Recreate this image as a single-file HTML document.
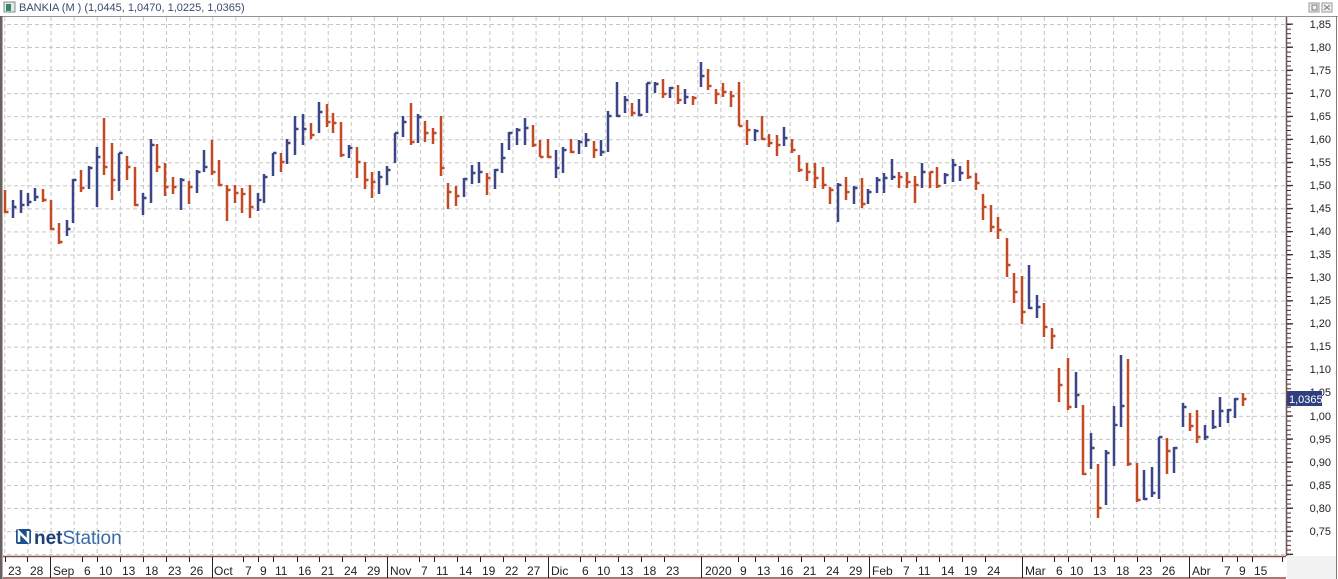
<!DOCTYPE html>
<html><head><meta charset="utf-8"><style>
html,body{margin:0;padding:0;background:#fff;}
body{width:1338px;height:579px;overflow:hidden;position:relative;font-family:"Liberation Sans",sans-serif;}
</style></head><body>
<svg width="1338" height="579" viewBox="0 0 1338 579" xmlns="http://www.w3.org/2000/svg" style="position:absolute;left:0;top:0">
<defs>
<pattern id="hg" patternUnits="userSpaceOnUse" x="0" y="24" width="1338" height="23.05">
<line x1="0" y1="0.5" x2="1338" y2="0.5" stroke="#c4c4c4" stroke-width="1" stroke-dasharray="4,3"/>
</pattern>
<pattern id="vg" patternUnits="userSpaceOnUse" x="4.3" y="17" width="23.1" height="600">
<line x1="0.5" y1="0" x2="0.5" y2="600" stroke="#c4c4c4" stroke-width="1" stroke-dasharray="4,3"/>
</pattern>
</defs>
<rect width="1338" height="579" fill="#fff"/>
<rect x="0" y="0" width="1338" height="15" fill="#fff"/>
<rect x="4" y="2" width="11" height="10" fill="#e8e8e8" stroke="#888" stroke-width="1"/>
<rect x="6" y="4" width="5" height="7" fill="#2e8a6e"/>
<text x="19" y="11" font-size="11" fill="#3a4a6a">BANKIA (M ) (1,0445, 1,0470, 1,0225, 1,0365)</text>
<rect x="1309" y="3" width="10" height="9" fill="#f0f0f0" stroke="#999"/>
<rect x="1312" y="5" width="5" height="5" fill="none" stroke="#777"/>
<rect x="1322" y="3" width="10" height="9" fill="#f0f0f0" stroke="#999"/>
<path d="M1324 5l6 5M1330 5l-6 5" stroke="#777" stroke-width="1"/>
<line x1="0" y1="16.5" x2="1338" y2="16.5" stroke="#9a9090" stroke-width="1"/>
<rect x="0" y="16" width="2.5" height="563" fill="#6a6060"/>
<rect x="4" y="17" width="1282" height="539" fill="url(#hg)"/>
<rect x="4" y="17" width="1282" height="539" fill="url(#vg)"/>
<line x1="1286.5" y1="17" x2="1286.5" y2="556" stroke="#7a5050" stroke-width="1.5"/>
<line x1="1289" y1="24" x2="1289" y2="556" stroke="#333" stroke-width="4" stroke-dasharray="1 3.61"/>
<line x1="1290" y1="23.5" x2="1290" y2="556" stroke="#333" stroke-width="6" stroke-dasharray="1.3 21.75"/>
<line x1="1336.5" y1="16" x2="1336.5" y2="579" stroke="#8a7a7a" stroke-width="1"/>
<g font-size="11" fill="#222" text-anchor="end">
<text x="1331" y="28">1,85</text><text x="1331" y="51">1,80</text><text x="1331" y="74">1,75</text><text x="1331" y="97">1,70</text><text x="1331" y="120">1,65</text><text x="1331" y="143">1,60</text><text x="1331" y="166">1,55</text><text x="1331" y="189">1,50</text><text x="1331" y="212">1,45</text><text x="1331" y="235">1,40</text><text x="1331" y="258">1,35</text><text x="1331" y="281">1,30</text><text x="1331" y="304">1,25</text><text x="1331" y="327">1,20</text><text x="1331" y="350">1,15</text><text x="1331" y="373">1,10</text><text x="1331" y="396">1,05</text><text x="1331" y="420">1,00</text><text x="1331" y="443">0,95</text><text x="1331" y="466">0,90</text><text x="1331" y="489">0,85</text><text x="1331" y="512">0,80</text><text x="1331" y="535">0,75</text>
</g>
<rect x="1287" y="391" width="35" height="15" fill="#2f3f80"/>
<text x="1289" y="403" font-size="11" fill="#fff">1,0365</text>
<path fill="none" stroke="#c24b25" stroke-width="2.5" d="M5 190V213M5 212h3.5M43 189V202M43 200h3.5M51 200V230M51 229h3.5M59 223V244M59 242h3.5M81 170V192M81 188h3.5M104 118V175M104 167h3.5M112 143V200M112 180h3.5M127 156V180M127 167h3.5M135 167V206M135 205h3.5M157 144V172M157 167h3.5M165 163V196M165 187h3.5M173 177V194M173 187h3.5M189 181V204M189 187h3.5M212 140V175M212 172h3.5M219 160V186M219 185h3.5M227 185V221M227 190h3.5M235 185V203M235 193h3.5M242 188V213M242 194h3.5M250 185V218M250 207h3.5M281 153V172M281 162h3.5M311 123V139M311 135h3.5M327 104V127M327 122h3.5M333 113V133M333 123h3.5M341 122V157M341 155h3.5M357 147V178M357 162h3.5M365 162V189M365 180h3.5M372 172V198M372 182h3.5M411 103V145M411 142h3.5M425 121V142M425 133h3.5M433 128V144M433 133h3.5M441 116V176M441 168h3.5M448 183V209M448 192h3.5M456 186V206M456 196h3.5M487 173V195M487 178h3.5M533 125V147M533 145h3.5M540 140V157M540 157h3.5M548 139V158M548 157h3.5M571 139V153M571 152h3.5M594 141V158M594 150h3.5M632 103V116M632 113h3.5M663 79V98M663 94h3.5M678 85V104M678 100h3.5M693 96V105M693 98h3.5M708 69V90M708 86h3.5M716 89V104M716 94h3.5M723 83V97M723 92h3.5M731 91V107M731 96h3.5M739 82V126M739 126h3.5M747 120V145M747 130h3.5M762 116V140M762 139h3.5M769 134V147M769 143h3.5M777 135V156M777 145h3.5M792 139V153M792 150h3.5M799 155V172M799 170h3.5M807 163V181M807 172h3.5M815 163V188M815 178h3.5M823 167V189M823 185h3.5M830 187V204M830 190h3.5M846 177V200M846 192h3.5M862 178V208M862 204h3.5M899 172V188M899 177h3.5M907 172V188M907 182h3.5M915 176V203M915 185h3.5M930 172V188M930 172h3.5M937 167V188M937 186h3.5M968 160V179M968 177h3.5M976 173V190M976 183h3.5M983 194V220M983 207h3.5M991 205V232M991 227h3.5M998 217V239M998 230h3.5M1007 238V277M1007 265h3.5M1014 273V303M1014 292h3.5M1022 276V324M1022 312h3.5M1044 303V337M1044 327h3.5M1052 328V349M1052 336h3.5M1059 368V402M1059 385h3.5M1068 358V410M1068 407h3.5M1083 405V475M1083 474h3.5M1098 464V518M1098 508h3.5M1128 359V466M1128 464h3.5M1137 463V502M1137 500h3.5M1167 438V474M1167 451h3.5M1190 413V431M1190 426h3.5M1197 410V443M1197 437h3.5M1243 393V406M1243 399h3.5"/>
<path fill="none" stroke="#3a4688" stroke-width="2.5" d="M13 200V218M13 207h3.5M21 190V213M21 205h3.5M28 193V206M28 202h3.5M35 188V201M35 197h3.5M67 220V236M67 229h3.5M73 179V223M73 180h3.5M89 166V189M89 168h3.5M97 147V207M97 157h3.5M119 153V191M119 153h3.5M143 193V215M143 198h3.5M151 139V203M151 145h3.5M181 178V210M181 180h3.5M197 170V193M197 172h3.5M204 150V172M204 167h3.5M258 193V211M258 200h3.5M264 174V203M264 177h3.5M273 153V176M273 153h3.5M287 139V164M287 143h3.5M295 116V155M295 129h3.5M303 114V145M303 129h3.5M319 102V133M319 112h3.5M349 145V158M349 148h3.5M379 171V194M379 177h3.5M387 166V185M387 170h3.5M395 133V163M395 133h3.5M403 116V137M403 122h3.5M418 114V143M418 117h3.5M464 178V197M464 179h3.5M472 165V184M472 173h3.5M479 162V183M479 172h3.5M495 169V189M495 170h3.5M502 143V173M502 158h3.5M509 132V150M509 133h3.5M517 128V145M517 130h3.5M525 118V145M525 128h3.5M556 150V178M556 168h3.5M563 147V173M563 150h3.5M579 140V154M579 142h3.5M586 133V147M586 140h3.5M601 140V156M601 152h3.5M608 111V152M608 116h3.5M617 82V117M617 116h3.5M625 96V113M625 100h3.5M639 99V116M639 115h3.5M647 83V113M647 83h3.5M655 82V93M655 84h3.5M670 87V98M670 88h3.5M685 89V104M685 97h3.5M701 62V87M701 76h3.5M755 129V141M755 131h3.5M784 127V146M784 138h3.5M838 183V222M838 185h3.5M854 186V204M854 188h3.5M868 189V204M868 192h3.5M877 177V193M877 180h3.5M884 173V193M884 178h3.5M892 159V180M892 177h3.5M922 163V188M922 172h3.5M945 173V184M945 175h3.5M953 159V182M953 165h3.5M960 166V181M960 173h3.5M1029 265V309M1029 308h3.5M1037 295V318M1037 307h3.5M1076 372V408M1076 395h3.5M1091 433V469M1091 448h3.5M1106 450V505M1106 453h3.5M1114 406V466M1114 425h3.5M1121 355V427M1121 406h3.5M1144 470V500M1144 499h3.5M1152 467V497M1152 493h3.5M1159 437V499M1159 437h3.5M1174 447V473M1174 448h3.5M1183 403V427M1183 407h3.5M1205 425V440M1205 437h3.5M1213 410V429M1213 427h3.5M1220 397V427M1220 411h3.5M1228 409V423M1228 410h3.5M1235 398V418M1235 399h3.5"/>
<rect x="16" y="529" width="15" height="15" rx="2" fill="#1e4f8f"/>
<path d="M19 542V532l9 9V531" fill="none" stroke="#fff" stroke-width="2.6"/>
<text x="34" y="544" font-size="19" fill="#3a6aa6"><tspan font-weight="bold" fill="#1e3f7a">net</tspan><tspan>Station</tspan></text>
<rect x="3" y="556" width="1283" height="23" fill="#fff"/>
<line x1="3" y1="556.5" x2="1286" y2="556.5" stroke="#8a4a4a" stroke-width="1.5"/>
<line x1="3" y1="578" x2="1286" y2="578" stroke="#8a4a4a" stroke-width="1.5"/>
<rect x="1287" y="556" width="49" height="23" fill="#f2f2f2"/>
<path stroke="#222" stroke-width="1" d="M50.5 557V578M212.5 557V578M387.5 557V578M548.5 557V578M701.5 557V578M869.5 557V578M1022.5 557V578M1189.5 557V578"/>
<path stroke="#222" stroke-width="1" d="M5.5 557v5M27.5 557v5M82.5 557v5M97.5 557v5M120.5 557v5M143.5 557v5M166.5 557v5M189.5 557v5M243.5 557v5M258.5 557v5M273.5 557v5M297.5 557v5M319.5 557v5M342.5 557v5M365.5 557v5M419.5 557v5M434.5 557v5M457.5 557v5M480.5 557v5M503.5 557v5M525.5 557v5M580.5 557v5M595.5 557v5M618.5 557v5M641.5 557v5M664.5 557v5M738.5 557v5M755.5 557v5M778.5 557v5M801.5 557v5M824.5 557v5M847.5 557v5M901.5 557v5M916.5 557v5M939.5 557v5M962.5 557v5M985.5 557v5M1054.5 557v5M1068.5 557v5M1091.5 557v5M1114.5 557v5M1137.5 557v5M1160.5 557v5M1222.5 557v5M1237.5 557v5M1252.5 557v5M1282.5 557v5"/>
<g font-size="12" fill="#222">
<text x="8" y="575">23</text><text x="30" y="575">28</text><text x="53" y="575">Sep</text><text x="84" y="575">6</text><text x="99" y="575">10</text><text x="122" y="575">13</text><text x="145" y="575">18</text><text x="168" y="575">23</text><text x="190" y="575">26</text><text x="214" y="575">Oct</text><text x="245" y="575">7</text><text x="260" y="575">9</text><text x="275" y="575">11</text><text x="298" y="575">16</text><text x="321" y="575">21</text><text x="344" y="575">24</text><text x="367" y="575">29</text><text x="390" y="575">Nov</text><text x="421" y="575">7</text><text x="436" y="575">11</text><text x="459" y="575">14</text><text x="482" y="575">19</text><text x="505" y="575">22</text><text x="527" y="575">27</text><text x="551" y="575">Dic</text><text x="582" y="575">6</text><text x="597" y="575">10</text><text x="620" y="575">13</text><text x="643" y="575">18</text><text x="666" y="575">23</text><text x="705" y="575">2020</text><text x="740" y="575">9</text><text x="757" y="575">13</text><text x="780" y="575">16</text><text x="803" y="575">21</text><text x="826" y="575">24</text><text x="849" y="575">29</text><text x="872" y="575">Feb</text><text x="903" y="575">7</text><text x="918" y="575">11</text><text x="941" y="575">14</text><text x="964" y="575">19</text><text x="987" y="575">24</text><text x="1025" y="575">Mar</text><text x="1056" y="575">6</text><text x="1070" y="575">10</text><text x="1093" y="575">13</text><text x="1116" y="575">18</text><text x="1139" y="575">23</text><text x="1162" y="575">26</text><text x="1192" y="575">Abr</text><text x="1224" y="575">7</text><text x="1239" y="575">9</text><text x="1254" y="575">15</text>
</g>
</svg>
</body></html>
